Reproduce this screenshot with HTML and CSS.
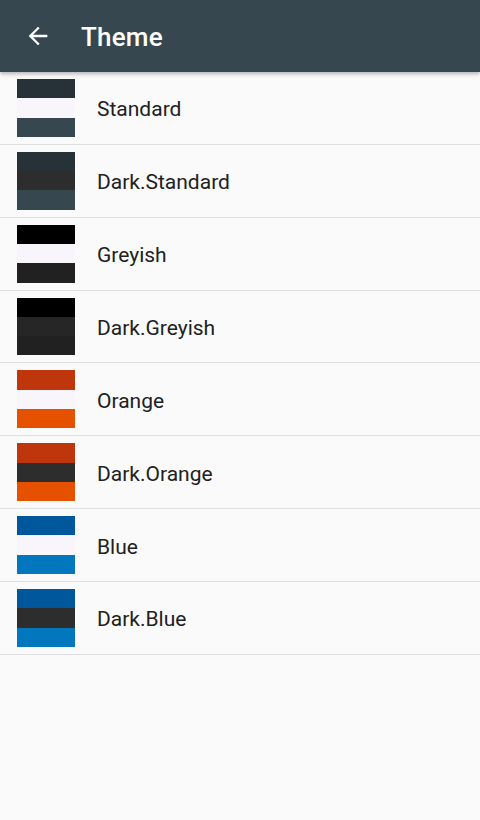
FILE: index.html
```html
<!DOCTYPE html>
<html>
<head>
<meta charset="utf-8">
<link rel="stylesheet" href="styles.css">
</head>
<body>
<header class="appbar">
  <svg class="back" viewBox="0 0 24 24" width="24" height="24"><path d="M20 11H7.83l5.59-5.59L12 4l-8 8 8 8 1.41-1.41L7.83 13H20v-2z" fill="#fff"/></svg>
  <h1 class="title">Theme</h1>
</header>
<ul class="list">
  <li class="row"><div class="swatch"><span class="b1 c-bg900"></span><span class="b2 c-light"></span><span class="b3 c-bg800"></span></div><span class="label">Standard</span></li>
  <li class="row"><div class="swatch"><span class="b1 c-bg900"></span><span class="b2 c-dark"></span><span class="b3 c-bg800"></span></div><span class="label">Dark.Standard</span></li>
  <li class="row"><div class="swatch"><span class="b1 c-black"></span><span class="b2 c-light"></span><span class="b3 c-g900"></span></div><span class="label">Greyish</span></li>
  <li class="row"><div class="swatch"><span class="b1 c-black"></span><span class="b2 c-g850"></span><span class="b3 c-g900"></span></div><span class="label">Dark.Greyish</span></li>
  <li class="row"><div class="swatch"><span class="b1 c-or1"></span><span class="b2 c-light"></span><span class="b3 c-or2"></span></div><span class="label">Orange</span></li>
  <li class="row"><div class="swatch"><span class="b1 c-or1"></span><span class="b2 c-dark"></span><span class="b3 c-or2"></span></div><span class="label">Dark.Orange</span></li>
  <li class="row"><div class="swatch"><span class="b1 c-bl1"></span><span class="b2 c-light"></span><span class="b3 c-bl2"></span></div><span class="label">Blue</span></li>
  <li class="row"><div class="swatch"><span class="b1 c-bl1"></span><span class="b2 c-dark"></span><span class="b3 c-bl2"></span></div><span class="label">Dark.Blue</span></li>
</ul>
</body>
</html>
```
FILE: styles.css
```css
html, body {
  margin: 0;
  padding: 0;
  background: #fafafa;
  font-family: Roboto, "Noto Sans", sans-serif;
  height: 100%;
}
.appbar {
  height: 72px;
  background: #37474f;
  display: flex;
  align-items: center;
  box-shadow: 0 2px 4px rgba(0,0,0,0.28);
  position: relative;
  z-index: 1;
}
.back {
  margin-left: 24px;
  width: 28px;
  height: 28px;
}
.title {
  margin: 2px 0 0 29px;
  color: #fff;
  font-size: 26px;
  font-weight: 500;
  letter-spacing: 0.2px;
}
.list {
  list-style: none;
  margin: 0;
  padding: 0;
}
.row {
  height: 71.86px;
  border-bottom: 1px solid #e0e0e0;
  display: flex;
  align-items: center;
}
.swatch {
  margin-left: 17px;
  width: 58px;
  height: 58px;
  display: flex;
  flex-direction: column;
}
.swatch span {
  flex: 1;
}
.label {
  margin-left: 22px;
  padding-top: 3px;
  font-size: 21px;
  color: #212121;
}
.c-bg900 { background: #263238; }
.c-bg800 { background: #37474f; }
.c-light { background: #f8f6fa; }
.c-dark { background: #2d2d2d; }
.c-black { background: #000; }
.c-g900 { background: #212121; }
.c-g850 { background: #262626; }
.c-or1 { background: #bf360c; }
.c-or2 { background: #e65100; }
.c-bl1 { background: #01579b; }
.c-bl2 { background: #0277bd; }
```
